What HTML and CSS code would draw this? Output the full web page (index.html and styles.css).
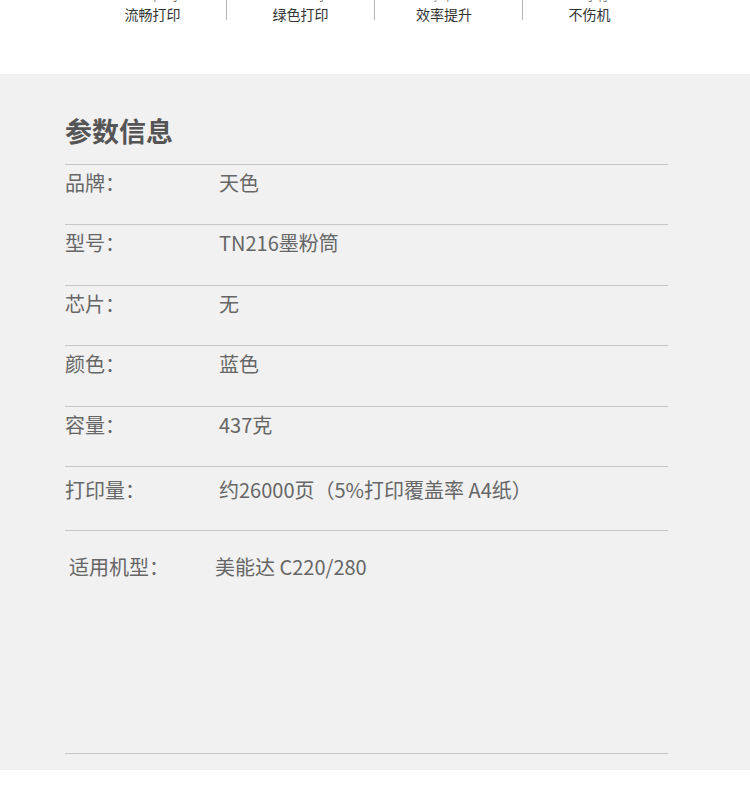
FILE: index.html
```html
<!DOCTYPE html>
<html lang="zh-CN">
<head>
    <meta charset="UTF-8">
    <meta name="viewport" content="width=device-width, initial-scale=1.0">
    <title>参数信息</title>
    <link rel="stylesheet" href="styles.css">
</head>
<body>
    <div class="features">
        <div class="feature">
            <p class="en">Smooth printing</p>
            <p class="cn">流畅打印</p>
        </div>
        <span class="sep"></span>
        <div class="feature">
            <p class="en">Green Printing</p>
            <p class="cn">绿色打印</p>
        </div>
        <span class="sep"></span>
        <div class="feature shift-sm">
            <p class="en">Efficiency improvement</p>
            <p class="cn">效率提升</p>
        </div>
        <span class="sep"></span>
        <div class="feature shift-lg">
            <p class="en">Blackening Upgrade</p>
            <p class="cn">不伤机</p>
        </div>
    </div>

    <div class="params">
        <div class="wrap">
            <h2 class="title">参数信息</h2>
            <div class="row">
                <span class="label">品牌：</span>
                <span class="value">天色</span>
            </div>
            <div class="row">
                <span class="label">型号：</span>
                <span class="value">TN216墨粉筒</span>
            </div>
            <div class="row">
                <span class="label">芯片：</span>
                <span class="value">无</span>
            </div>
            <div class="row">
                <span class="label">颜色：</span>
                <span class="value">蓝色</span>
            </div>
            <div class="row">
                <span class="label">容量：</span>
                <span class="value">437克</span>
            </div>
            <div class="row row-tall">
                <span class="label">打印量：</span>
                <span class="value">约26000页（5%打印覆盖率 A4纸）</span>
            </div>
            <div class="row row-models">
                <span class="label">适用机型：</span>
                <span class="value">美能达 C220/280</span>
            </div>
        </div>
    </div>
</body>
</html>
```

FILE: styles.css
```css
* {
    box-sizing: border-box;
}

html, body {
    margin: 0;
    background-color: #ffffff;
    font-family: "Noto Sans CJK SC", "Noto Sans", sans-serif;
}

p, h2 {
    margin: 0;
}

/* top strip, the tiny english captions are cut off by the crop */
.features {
    display: flex;
    align-items: flex-start;
    height: 80px;
    margin-top: -6px;
    padding-left: 79px;
}

.feature {
    width: 147px;
    text-align: center;
}

.feature.shift-sm {
    padding-right: 9px;
}

.feature.shift-lg {
    padding-right: 14px;
}

.feature .en {
    font-family: "Liberation Sans", sans-serif;
    font-size: 7px;
    line-height: 8px;
    height: 8px;
    color: #444;
}

.feature .cn {
    margin-top: 5px;
    font-size: 14px;
    line-height: 14px;
    color: #333;
}

.sep {
    width: 1px;
    height: 26px;
    background-color: #b4b4b4;
}

.params {
    background-color: #f1f1f1;
    padding: 43px 0 16px;
}

.wrap {
    width: 603px;
    margin-left: 65px;
    color: #666;
}

.title {
    font-size: 27px;
    line-height: 27px;
    font-weight: bold;
    color: #555;
    margin-bottom: 20px;
}

.row {
    display: flex;
    height: 60.4px;
    padding-top: 8px;
    border-top: 1px solid #c6c6c6;
    font-size: 20px;
    line-height: 20px;
}

.row .label {
    width: 154px;
}

.row-tall {
    height: 64px;
    padding-top: 13px;
}

.row-models {
    height: 224px;
    padding-top: 26px;
    padding-left: 4px;
    border-bottom: 1px solid #c6c6c6;
}

.row-models .label {
    width: 146px;
}
```
